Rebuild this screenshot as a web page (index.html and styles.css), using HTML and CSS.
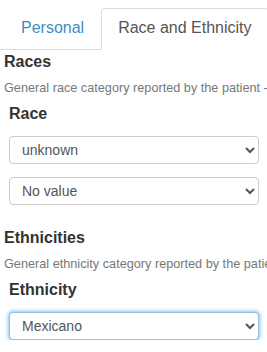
FILE: index.html
```html
<!DOCTYPE html>
<html lang="en">
<head>
  <meta charset="UTF-8">
  <meta name="viewport" content="width=device-width, initial-scale=1.0">
  <title>Patient - Race and Ethnicity</title>
  <link rel="stylesheet" href="styles.css">
</head>
<body>
  <!-- Tabs -->
  <ul class="nav-tabs">
    <li><a href="#">Personal</a></li>
    <li class="active"><a href="#">Race and Ethnicity</a></li>
  </ul>

  <main class="tab-content">
    <section class="group">
      <h4>Races</h4>
      <p class="desc">General race category reported by the patient - subject may select one or more</p>
      <div class="field">
        <label for="race1">Race</label>
        <select id="race1">
          <option>unknown</option>
        </select>
        <select id="race2">
          <option>No value</option>
        </select>
      </div>
    </section>

    <section class="group">
      <h4>Ethnicities</h4>
      <p class="desc">General ethnicity category reported by the patient - subject may select one or more</p>
      <div class="field">
        <label for="ethnicity">Ethnicity</label>
        <select id="ethnicity" class="focused">
          <option>Mexicano</option>
        </select>
      </div>
    </section>
  </main>
</body>
</html>
```

FILE: styles.css
```css
/* Base */
html {
  overflow: hidden;
}
body {
  margin: 0;
  font-family: 'Liberation Sans', Arial, sans-serif;
  color: #333333;
  background: #ffffff;
}

/* Tabs */
.nav-tabs {
  display: flex;
  list-style: none;
  margin: 0;
  padding: 8px 0 0 4px;
  border-bottom: 1px solid #dddddd;
  white-space: nowrap;
}
.nav-tabs li {
  margin-bottom: -1px;
}
.nav-tabs a {
  display: block;
  padding: 8px 16px 10px;
  line-height: 22px;
  font-size: 16px;
  color: #3b8ec2;
  text-decoration: none;
  border: 1px solid transparent;
  border-radius: 4px 4px 0 0;
}
.nav-tabs .active a {
  color: #555555;
  background: #ffffff;
  border-color: #dddddd #dddddd transparent;
}

/* Content */
.tab-content {
  padding-left: 4px;
}
.group + .group {
  margin-top: 24px;
}
.group h4 {
  margin: 3px 0 0;
  font-size: 16px;
  line-height: 18px;
  font-weight: bold;
}
.desc {
  margin: 8px 0 0;
  font-size: 12.7px;
  line-height: 18px;
  color: #777777;
  white-space: nowrap;
  overflow: hidden;
}
.field {
  padding: 0 8px 0 5px;
}
.field label {
  display: block;
  margin-top: 8px;
  font-size: 16px;
  line-height: 18px;
  font-weight: bold;
}
.field select {
  display: block;
  width: 100%;
  height: 28px;
  margin-top: 13px;
  padding: 0 8px;
  font-family: 'Liberation Sans', Arial, sans-serif;
  font-size: 14px;
  color: #555555;
  background: #ffffff;
  border: 1px solid #cccccc;
  border-radius: 4px;
  box-sizing: border-box;
}
.field select.focused {
  border-color: #8ec2ea;
  outline: none;
  box-shadow: 0 0 0 1px rgba(102, 175, 233, 0.15), 0 0 3px 2px rgba(102, 175, 233, 0.45);
}
```
